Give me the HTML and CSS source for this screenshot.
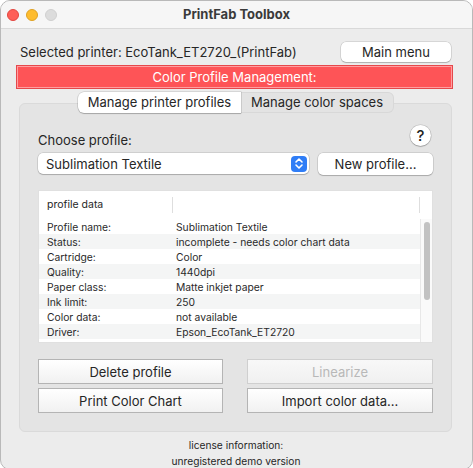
FILE: index.html
```html
<!DOCTYPE html>
<html>
<head>
<meta charset="utf-8">
<link rel="stylesheet" href="styles.css">
</head>
<body>
<div class="window">
  <div class="titlebar">
    <div class="lights">
      <span class="light red"></span>
      <span class="light yellow"></span>
      <span class="light gray"></span>
    </div>
    <div class="title">PrintFab Toolbox</div>
  </div>
  <div class="content">
    <div class="printer-row">
      <span class="printer-label">Selected printer: EcoTank_ET2720_(PrintFab)</span>
      <button class="btn-round main-menu">Main menu</button>
    </div>
    <div class="banner">Color Profile Management:</div>
    <div class="tabs">
      <div class="tab active">Manage printer profiles</div>
      <div class="tab">Manage color spaces</div>
    </div>
    <div class="group">
      <div class="choose-row">
        <span class="choose-label">Choose profile:</span>
        <span class="help">?</span>
      </div>
      <div class="popup-row">
        <div class="popup">
          <span class="popup-text">Sublimation Textile</span>
          <span class="stepper">
            <svg width="10" height="13" viewBox="0 0 10 13"><path d="M2 5 L5 2 L8 5 M2 8 L5 11 L8 8" fill="none" stroke="#fff" stroke-width="1.6" stroke-linecap="round" stroke-linejoin="round"/></svg>
          </span>
        </div>
        <button class="btn-round new-profile">New profile...</button>
      </div>
      <div class="table">
        <div class="thead">
          <div class="th th1">profile data</div>
          <div class="th th2"></div>
          <div class="th th3"></div>
        </div>
        <div class="tbody">
          <div class="rows">
            <div class="tr"><span class="c1">Profile name:</span><span class="c2">Sublimation Textile</span></div>
            <div class="tr alt"><span class="c1">Status:</span><span class="c2">incomplete - needs color chart data</span></div>
            <div class="tr"><span class="c1">Cartridge:</span><span class="c2">Color</span></div>
            <div class="tr alt"><span class="c1">Quality:</span><span class="c2">1440dpi</span></div>
            <div class="tr"><span class="c1">Paper class:</span><span class="c2">Matte inkjet paper</span></div>
            <div class="tr alt"><span class="c1">Ink limit:</span><span class="c2">250</span></div>
            <div class="tr"><span class="c1">Color data:</span><span class="c2">not available</span></div>
            <div class="tr alt"><span class="c1">Driver:</span><span class="c2">Epson_EcoTank_ET2720</span></div>
            <div class="tr"><span class="c1"></span><span class="c2">Sindoor Textile</span></div>
          </div>
          <div class="scrollbar"><div class="thumb"></div></div>
        </div>
      </div>
      <div class="buttons">
        <button class="btn-sq">Delete profile</button>
        <button class="btn-sq disabled">Linearize</button>
        <button class="btn-sq">Print Color Chart</button>
        <button class="btn-sq">Import color data...</button>
      </div>
    </div>
    <div class="footer">
      <div>license information:</div>
      <div>unregistered demo version</div>
    </div>
  </div>
</div>
</body>
</html>
```
FILE: styles.css
```css
* { box-sizing: border-box; }
html, body { margin: 0; padding: 0; background: #ffffff; }
body {
  font-family: Inter, "Liberation Sans", sans-serif;
  color: #222;
  width: 473px;
  height: 468px;
  overflow: hidden;
}
.window {
  width: 473px;
  height: 470px;
  background: #ececec;
  border: 1px solid #b9b9b9;
  border-radius: 10px;
  overflow: hidden;
}
.titlebar {
  height: 28px;
  background: #f6f6f6;
  border-bottom: 1px solid #d9d9d9;
  display: flex;
  align-items: center;
  position: relative;
}
.lights {
  display: flex;
  gap: 7px;
  padding-left: 6px;
}
.light {
  width: 12px;
  height: 12px;
  border-radius: 50%;
  display: block;
}
.light.red { background: #fe5f57; border: 0.5px solid #e2463f; }
.light.yellow { background: #febc2e; border: 0.5px solid #dea123; }
.light.gray { background: #dcdcdc; border: 0.5px solid #cfcfcf; }
.title {
  position: absolute;
  left: 0; right: 0; top: 0;
  line-height: 27px;
  text-align: center;
  font-weight: 700;
  font-size: 13px;
  color: #3a3a3a;
}
.content {
  padding: 13px 19px 0 14px;
}
.printer-row {
  display: flex;
  justify-content: space-between;
  align-items: center;
  height: 20px;
  padding-left: 5px;
  padding-right: 2px;
}
.printer-label { font-size: 13px; color: #262626; }
button { font-family: inherit; }
.btn-round {
  background: #ffffff;
  border: none;
  border-radius: 5px;
  box-shadow: 0 0 0 0.5px rgba(0,0,0,0.18), 0 1px 1px rgba(0,0,0,0.18);
  font-size: 13px;
  color: #262626;
  padding: 0;
}
.main-menu { width: 110px; height: 20px; }
.banner {
  margin-top: 3px;
  height: 24px;
  background: #fe5457;
  border: 1px solid #e5484b;
  box-shadow: inset 0 0 0 1px #ff9ea0;
  color: #fff;
  font-size: 13px;
  text-align: center;
  line-height: 22px;
  margin-left: 1px;
}
.tabs {
  display: flex;
  justify-content: flex-start;
  margin-top: 3px;
  padding-left: 63px;
  position: relative;
  z-index: 1;
}
.tab {
  height: 21px;
  font-size: 13px;
  line-height: 21px;
  color: #262626;
  background: #e3e3e3;
  border: 1px solid #d8d8d8;
  padding: 0;
  white-space: nowrap;
  text-align: center;
}
.tab:first-child { border-radius: 6px 0 0 6px; }
.tab:last-child { border-radius: 0 6px 6px 0; border-left: none; width: 153px; line-height: 19px; }
.tab.active {
  background: #ffffff;
  border: none;
  box-shadow: 0 0 0 0.5px rgba(0,0,0,0.18), 0 1px 1px rgba(0,0,0,0.2);
  width: 163px;
  position: relative;
  z-index: 1;
}
.group {
  margin: -10px 1px 0 4px;
  height: 329px;
  background: #e4e4e4;
  border: 1px solid #dadada;
  border-radius: 6px;
  padding: 0 18px 0 18px;
}
.choose-row {
  display: flex;
  justify-content: space-between;
  align-items: center;
  margin-top: 21px;
  height: 20px;
  padding-right: 1px;
}
.choose-label { font-size: 13px; color: #262626; padding-top: 10px; }
.help {
  width: 21px;
  height: 21px;
  border-radius: 50%;
  background: #fff;
  box-shadow: 0 0 0 0.5px rgba(0,0,0,0.18), 0 1px 1px rgba(0,0,0,0.2);
  font-size: 15px;
  font-weight: 500;
  text-align: center;
  line-height: 21px;
  color: #222;
  margin-right: 1px;
}
.popup-row {
  display: flex;
  justify-content: space-between;
  margin-top: 8px;
  height: 22px;
}
.popup {
  width: 271px;
  height: 21px;
  background: #fff;
  border-radius: 5px;
  box-shadow: 0 0 0 0.5px rgba(0,0,0,0.18), 0 1px 1px rgba(0,0,0,0.18);
  display: flex;
  align-items: center;
  justify-content: space-between;
  padding: 0 2px 0 8px;
}
.popup-text { font-size: 13px; color: #262626; }
.stepper {
  width: 16px;
  height: 16px;
  background: #2f7df6;
  border-radius: 4px;
  display: flex;
  align-items: center;
  justify-content: center;
}
.new-profile { width: 115px; height: 22px; }
.table {
  margin-top: 15px;
  height: 153px;
  background: #fff;
  border: 1px solid #e0e0e0;
  display: flex;
  flex-direction: column;
  overflow: hidden;
}
.thead {
  height: 28px;
  display: flex;
  align-items: center;
  flex: none;
}
.th { height: 16px; font-size: 10.5px; color: #262626; line-height: 16px; }
.th1 { width: 134px; padding-left: 8px; border-right: 1px solid #dedede; }
.th2 { flex: 1; border-right: 1px solid #dedede; }
.th3 { width: 12px; }
.tbody {
  display: flex;
  flex: 1;
  min-height: 0;
}
.rows {
  flex: 1;
  overflow: hidden;
}
.tr {
  height: 15px;
  display: flex;
  align-items: center;
  font-size: 10.3px;
  color: #2a2a2a;
}
.tr.alt { background: #f4f5f5; }
.c1 { width: 137px; padding-left: 8px; }
.c2 { flex: 1; }
.scrollbar {
  width: 12px;
  flex: none;
  border-left: 1px solid #e8e8e8;
  background: #fafafa;
  padding: 3px 2px 0 3px;
}
.thumb {
  height: 78px;
  background: #c2c2c2;
  border-radius: 3px;
}
.buttons {
  margin-top: 16px;
  display: grid;
  grid-template-columns: 185px 186px;
  justify-content: space-between;
  row-gap: 4px;
}
.btn-sq {
  height: 25px;
  border: 1px solid #b4b4b4;
  background: linear-gradient(#ffffff, #f1f1f1);
  font-size: 13px;
  color: #262626;
  padding: 0;
}
.btn-sq.disabled { color: #b8b8b8; border-color: #cfcfcf; background: linear-gradient(#f8f8f8, #f0f0f0); }
.footer {
  text-align: center;
  font-size: 10.2px;
  line-height: 16px;
  color: #262626;
  margin-top: 5px;
  padding-left: 4px;
}
```
